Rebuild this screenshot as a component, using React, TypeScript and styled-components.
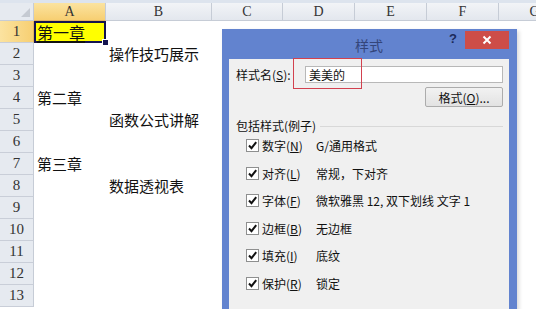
import React from "react";
import styled, { createGlobalStyle } from "styled-components";

const Global = createGlobalStyle`
  html, body { margin: 0; padding: 0; background: #ffffff; overflow: hidden; }
  body { width: 536px; height: 309px; font-family: "Noto Sans CJK SC", "Liberation Sans", sans-serif; }
`;

const COLS = [34, 72, 106, 71, 72, 72, 72, 72];
const Page = styled.div`
  position: relative;
  width: 536px;
  height: 309px;
  overflow: hidden;
  background: #fff;
  border-top: 3px solid #dde4ee;
  box-sizing: border-box;
`;

const Sheet = styled.div`
  display: grid;
  grid-template-columns: ${COLS.map((c) => c + "px").join(" ")};
  grid-template-rows: 18px repeat(13, 22px);
`;

const Corner = styled.div`
  background: #e6eaf0;
  border-right: 1px solid #c6ccd6;
  border-bottom: 1px solid #c6ccd6;
  position: relative;
  &::after {
    content: "";
    position: absolute;
    right: 3px;
    bottom: 3px;
    width: 0;
    height: 0;
    border-left: 9px solid transparent;
    border-bottom: 9px solid #c5cad2;
  }
`;

const ColHead = styled.div<{ $active?: boolean }>`
  background: ${(p) => (p.$active ? "linear-gradient(#fbe3a0, #f7cf72)" : "linear-gradient(#f2f4f7, #e3e7ee)")};
  border-right: 1px solid #c6ccd6;
  border-bottom: 1px solid ${(p) => (p.$active ? "#e2b45c" : "#c6ccd6")};
  display: flex;
  align-items: center;
  justify-content: center;
  font-family: "Liberation Serif", "DejaVu Serif", serif;
  font-size: 14px;
  color: #333;
`;

const RowHead = styled.div<{ $active?: boolean }>`
  background: ${(p) => (p.$active ? "linear-gradient(90deg, #fbe3a0, #f7cf72)" : "#e6eaf0")};
  border-right: 1px solid ${(p) => (p.$active ? "#e2b45c" : "#c6ccd6")};
  border-bottom: 1px solid #c9ced8;
  display: flex;
  align-items: center;
  justify-content: center;
  font-family: "Liberation Serif", "DejaVu Serif", serif;
  font-size: 15px;
  color: #333;
`;

const Cell = styled.div`
  display: flex;
  align-items: flex-end;
  padding: 0 0 2px 3px;
  font-size: 15px;
  line-height: 18px;
  color: #111;
  white-space: nowrap;
  overflow: visible;
  background: #fff;
`;

const SelectedCell = styled(Cell)`
  position: relative;
  background: #ffff00;
  box-shadow: inset 0 0 0 2px #141450;
  padding-left: 3px;
  font-size: 16px;
  span {
    text-decoration: underline;
    text-decoration-thickness: 2px;
    text-underline-offset: 2px;
  }
  &::after {
    content: "";
    position: absolute;
    right: -3px;
    bottom: -3px;
    width: 5px;
    height: 5px;
    background: #141450;
    border: 1px solid #fff;
  }
`;

const Dialog = styled.div`
  position: absolute;
  left: 222px;
  top: 26px;
  width: 295px;
  height: 300px;
  background: #6283cf;
  padding: 0 8px 0 7px;
  box-sizing: border-box;
  display: flex;
  flex-direction: column;
  box-shadow: 2px 2px 4px rgba(0, 0, 0, 0.15);
`;

const TitleBar = styled.div`
  height: 30px;
  flex: none;
  display: flex;
  align-items: flex-start;
  position: relative;
`;

const Title = styled.div`
  position: absolute;
  left: 0;
  right: 0;
  top: 6px;
  text-align: center;
  font-size: 14px;
  color: #34467a;
`;

const Help = styled.div`
  position: absolute;
  right: 52px;
  top: 2px;
  font-family: "Liberation Sans", sans-serif;
  font-weight: bold;
  font-size: 13px;
  color: #1c2a5a;
`;

const Close = styled.div`
  position: absolute;
  right: 0;
  top: 2px;
  width: 44px;
  height: 18px;
  background: #cd4d48;
  display: flex;
  align-items: center;
  justify-content: center;
`;

const Client = styled.div`
  flex: 1;
  background: #f0f0f0;
  padding: 7px 6px 0 7px;
  font-size: 12px;
  color: #111;
  position: relative;
`;

const NameRow = styled.div`
  display: flex;
  align-items: center;
  height: 17px;
`;

const Label = styled.span`
  width: 69px;
  flex: none;
  white-space: nowrap;
`;

const Input = styled.div`
  flex: 1;
  height: 17px;
  box-sizing: border-box;
  border: 1px solid #b8b8b8;
  background: #fff;
  padding-left: 3px;
  line-height: 15px;
  font-size: 12px;
`;

const RedMark = styled.div`
  position: absolute;
  left: 64px;
  top: -1px;
  width: 69px;
  height: 31px;
  border: 1px solid #d2414f;
  box-sizing: border-box;
`;

const ButtonRow = styled.div`
  display: flex;
  justify-content: flex-end;
  margin-top: 4px;
`;

const Btn = styled.div`
  width: 78px;
  height: 20px;
  box-sizing: border-box;
  border: 1px solid #acacac;
  border-radius: 2px;
  background: linear-gradient(#f2f2f2, #e2e2e2);
  display: flex;
  align-items: center;
  justify-content: center;
  font-size: 12px;
`;

const GroupHead = styled.div`
  display: flex;
  align-items: center;
  gap: 4px;
  margin-top: 9px;
  height: 18px;
  &::after {
    content: "";
    flex: 1;
    height: 1px;
    background: #d8d8d8;
    margin-top: 2px;
  }
`;

const List = styled.div`
  display: flex;
  flex-direction: column;
  gap: 10.6px;
  padding-left: 10px;
  margin-top: 3px;
`;

const Item = styled.div`
  display: flex;
  align-items: center;
  height: 17px;
  white-space: nowrap;
`;

const Box = styled.div`
  width: 13px;
  height: 13px;
  box-sizing: border-box;
  border: 1px solid #8e8f8f;
  background: #fff;
  display: flex;
  align-items: center;
  justify-content: center;
  margin-right: 3px;
  flex: none;
`;

const ItemLabel = styled.span`
  width: 54px;
  flex: none;
`;

const Key = styled.u`
  text-underline-offset: 1px;
`;

const Check = () => (
  <svg width="11" height="11" viewBox="0 0 11 11">
    <path d="M2 5.5 L4.5 8.2 L9.2 2.2" fill="none" stroke="#111" strokeWidth="2" />
  </svg>
);

const cols = ["A", "B", "C", "D", "E", "F", "G"];
const cells: Record<number, { col: number; text: string }> = {
  2: { col: 1, text: "操作技巧展示" },
  4: { col: 0, text: "第二章" },
  5: { col: 1, text: "函数公式讲解" },
  7: { col: 0, text: "第三章" },
  8: { col: 1, text: "数据透视表" },
};

const items = [
  ["数字", "N", "G/通用格式"],
  ["对齐", "L", "常规，下对齐"],
  ["字体", "F", "微软雅黑 12, 双下划线 文字 1"],
  ["边框", "B", "无边框"],
  ["填充", "I", "底纹"],
  ["保护", "R", "锁定"],
];

export default function App() {
  const rows: React.ReactNode[] = [];
  for (let r = 1; r <= 13; r++) {
    rows.push(
      <RowHead key={"h" + r} $active={r === 1}>
        {r}
      </RowHead>
    );
    for (let c = 0; c < 7; c++) {
      if (r === 1 && c === 0) {
        rows.push(
          <SelectedCell key={r + "-" + c}>
            <span>第一章</span>
          </SelectedCell>
        );
      } else {
        const d = cells[r];
        rows.push(<Cell key={r + "-" + c}>{d && d.col === c ? d.text : ""}</Cell>);
      }
    }
  }
  return (
    <>
      <Global />
      <Page>
        <Sheet>
          <Corner />
          {cols.map((c) => (
            <ColHead key={c} $active={c === "A"}>
              {c}
            </ColHead>
          ))}
          {rows}
        </Sheet>
        <Dialog>
          <TitleBar>
            <Title>样式</Title>
            <Help>?</Help>
            <Close>
              <svg width="10" height="10" viewBox="0 0 10 10">
                <path d="M1.5 1.5 L8.5 8.5 M8.5 1.5 L1.5 8.5" stroke="#fff" strokeWidth="2" />
              </svg>
            </Close>
          </TitleBar>
          <Client>
            <NameRow>
              <Label>
                样式名(<Key>S</Key>):
              </Label>
              <Input>美美的</Input>
            </NameRow>
            <RedMark />
            <ButtonRow>
              <Btn>
                格式(<Key>O</Key>)...
              </Btn>
            </ButtonRow>
            <GroupHead>包括样式(例子)</GroupHead>
            <List>
              {items.map(([a, k, v]) => (
                <Item key={a}>
                  <Box>
                    <Check />
                  </Box>
                  <ItemLabel>
                    {a}(<Key>{k}</Key>)
                  </ItemLabel>
                  <span>{v}</span>
                </Item>
              ))}
            </List>
          </Client>
        </Dialog>
      </Page>
    </>
  );
}
